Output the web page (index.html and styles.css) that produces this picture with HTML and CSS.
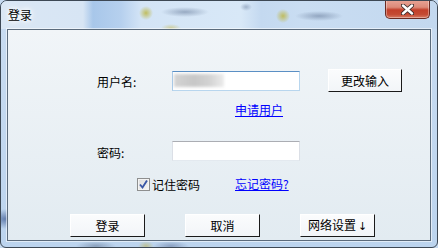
FILE: index.html
```html
<!DOCTYPE html>
<html lang="zh-CN">
<head>
<meta charset="utf-8">
<title>登录</title>
<link rel="stylesheet" href="styles.css">
</head>
<body>
<div class="window">
  <div class="titlebar">
    <span class="title">登录</span>
    <button class="close" type="button" aria-label="关闭">
      <svg width="13" height="11" viewBox="0 0 13 11">
        <path d="M2 1.5 L11 9.5 M11 1.5 L2 9.5" stroke="#3b2a2a" stroke-width="4.2" stroke-linecap="round" fill="none"/>
        <path d="M2 1.5 L11 9.5 M11 1.5 L2 9.5" stroke="#ffffff" stroke-width="2.4" stroke-linecap="round" fill="none"/>
      </svg>
    </button>
  </div>
  <div class="frame-body">
    <div class="client">
      <div class="row row-user">
        <span class="label">用户名:</span>
        <div class="input input-user"><span class="blurred"></span></div>
        <button class="btn btn-change" type="button">更改输入</button>
      </div>
      <div class="row row-link">
        <a class="link" href="#">申请用户</a>
      </div>
      <div class="row row-pass">
        <span class="label">密码:</span>
        <div class="input input-pass"></div>
      </div>
      <div class="row row-check">
        <span class="checkbox">
          <svg width="11" height="11" viewBox="0 0 11 11">
            <path d="M2 5.5 L4.5 8.5 L9 1.5" stroke="#3a57a6" stroke-width="1.9" fill="none"/>
          </svg>
        </span>
        <span class="check-text">记住密码</span>
        <a class="link link-forgot" href="#">忘记密码?</a>
      </div>
      <div class="row row-buttons">
        <button class="btn btn-main" type="button">登录</button>
        <button class="btn btn-main" type="button">取消</button>
        <button class="btn btn-main" type="button">网络设置<span class="arrow">↓</span></button>
      </div>
    </div>
  </div>
</div>
</body>
</html>
```

FILE: styles.css
```css
* { box-sizing: border-box; }

html, body {
  margin: 0;
  padding: 0;
  width: 438px;
  height: 248px;
  overflow: hidden;
  background: #c6daf0;
}

.window {
  width: 438px;
  height: 248px;
  display: flex;
  flex-direction: column;
  border: 1px solid #3d4854;
  border-radius: 7px 7px 6px 6px;
  overflow: hidden;
  font-family: "Noto Sans CJK SC", "Noto Sans", sans-serif;
  font-size: 12px;
  color: #000;
  background:
    radial-gradient(ellipse 14px 10px at 4px 218px, rgba(40,70,130,.6), rgba(40,70,130,0)),
    radial-gradient(ellipse 20px 5px at 95px 245px, rgba(90,110,140,.5), rgba(90,110,140,0)),
    radial-gradient(ellipse 8px 5px at 145px 245px, rgba(190,180,90,.6), rgba(190,180,90,0)),
    radial-gradient(ellipse 18px 5px at 170px 245px, rgba(90,110,150,.5), rgba(90,110,150,0)),
    linear-gradient(#c9dcf1, #bcd4ee);
}

.titlebar {
  height: 28px;
  flex: none;
  display: flex;
  justify-content: space-between;
  align-items: flex-start;
  padding: 0 7px 0 7px;
  background:
    radial-gradient(ellipse 7px 7px at 145px 12px, rgba(190,185,80,.9), rgba(190,185,80,0)),
    radial-gradient(ellipse 24px 5px at 184px 11px, rgba(110,130,160,.6), rgba(110,130,160,0)),
    radial-gradient(ellipse 7px 7px at 282px 15px, rgba(190,185,80,.9), rgba(190,185,80,0)),
    radial-gradient(ellipse 24px 5px at 318px 15px, rgba(110,130,160,.6), rgba(110,130,160,0)),
    radial-gradient(ellipse 6px 4px at 245px 6px, rgba(110,130,160,.5), rgba(110,130,160,0)),
    radial-gradient(ellipse 10px 4px at 170px 27px, rgba(200,190,100,.6), rgba(200,190,100,0)),
    linear-gradient(to right,
      #dae7f4 0, #d7e5f4 82px, #a8c7ea 92px, #b6d0ee 120px,
      #d3e4f6 140px, #d8e8f7 240px, #c4d9f0 260px, #c9ddf2 300px, #c3d8ef 100%);
}

.title {
  margin-top: 6px;
  line-height: 16px;
  font-size: 12px;
  color: #000;
  text-shadow: 0 0 4px #fff, 0 0 6px #fff, 0 0 8px rgba(255,255,255,.9);
}

.close {
  width: 45px;
  height: 19px;
  margin-top: -1px;
  padding: 0;
  display: flex;
  align-items: center;
  justify-content: center;
  border: 1px solid #6a2b23;
  border-top: none;
  border-radius: 0 0 5px 5px;
  background: linear-gradient(#e8a496 0, #dc8a79 40%, #c23f2a 55%, #c44a33 80%, #d77a64 100%);
  box-shadow: inset 0 0 0 1px rgba(255,255,255,.35);
}

.frame-body {
  flex: 1;
  display: flex;
  padding: 0 6px 6px 6px;
}

.client {
  flex: 1;
  border: 1px solid #5b6b7c;
  box-shadow: 0 0 0 1px rgba(255,255,255,.55);
  background: linear-gradient(#f1f5f8, #e2ebf1);
  display: flex;
  flex-direction: column;
  padding-top: 39px;
}

.row {
  display: flex;
  align-items: center;
}

.row-user {
  height: 23px;
  padding-left: 89px;
}

.label {
  width: 75px;
  line-height: 14px;
  padding-top: 3px;
}

.input {
  width: 128px;
  height: 20px;
  background: #fff;
  border: 1px solid #dbdfe6;
  border-top-color: #abadb3;
  border-bottom-color: #e3e9ef;
}

.input-user {
  border-color: #b8d6ee;
  border-top-color: #5b8fc4;
  border-left-color: #a9c9e6;
  display: flex;
  align-items: center;
  overflow: hidden;
}

.blurred {
  width: 50px;
  height: 13px;
  margin-left: 1px;
  background: linear-gradient(to right, #d4d4d4, #c7c7c7 40%, #d2d2d2 70%, #ececec);
  filter: blur(1.5px);
}

.btn {
  font-family: "Noto Sans CJK SC", "Noto Sans", sans-serif;
  font-size: 12px;
  color: #000;
  padding: 0;
  background: linear-gradient(#fbfcfd, #f2f5f8);
  border: 1px solid #fff;
  border-right-color: #1a1a1a;
  border-bottom-color: #1a1a1a;
  border-radius: 0;
  line-height: 16px;
}

.arrow {
  font-family: "DejaVu Sans", sans-serif;
  font-size: 11px;
  margin-left: 2px;
}

.btn-change {
  width: 74px;
  height: 23px;
  margin-left: 28px;
}

.row-link {
  margin-top: 10px;
  padding-left: 227px;
  height: 16px;
}

.link {
  color: #0000ff;
  text-decoration: underline;
  line-height: 16px;
}

.row-pass {
  margin-top: 23px;
  height: 20px;
  padding-left: 89px;
}

.row-check {
  margin-top: 15px;
  height: 16px;
  padding-left: 129px;
}

.checkbox {
  width: 13px;
  height: 13px;
  border: 1px solid #8e8f8f;
  background: linear-gradient(135deg, #dcdcdc, #f6f6f6);
  box-shadow: inset 0 0 0 1px #f4f4f4;
  display: flex;
  align-items: center;
  justify-content: center;
}

.check-text {
  margin-left: 2px;
  width: 83px;
}

.row-buttons {
  margin-top: 22px;
  padding-left: 62px;
  gap: 40px;
}

.btn-main {
  width: 75px;
  height: 23px;
}
```
